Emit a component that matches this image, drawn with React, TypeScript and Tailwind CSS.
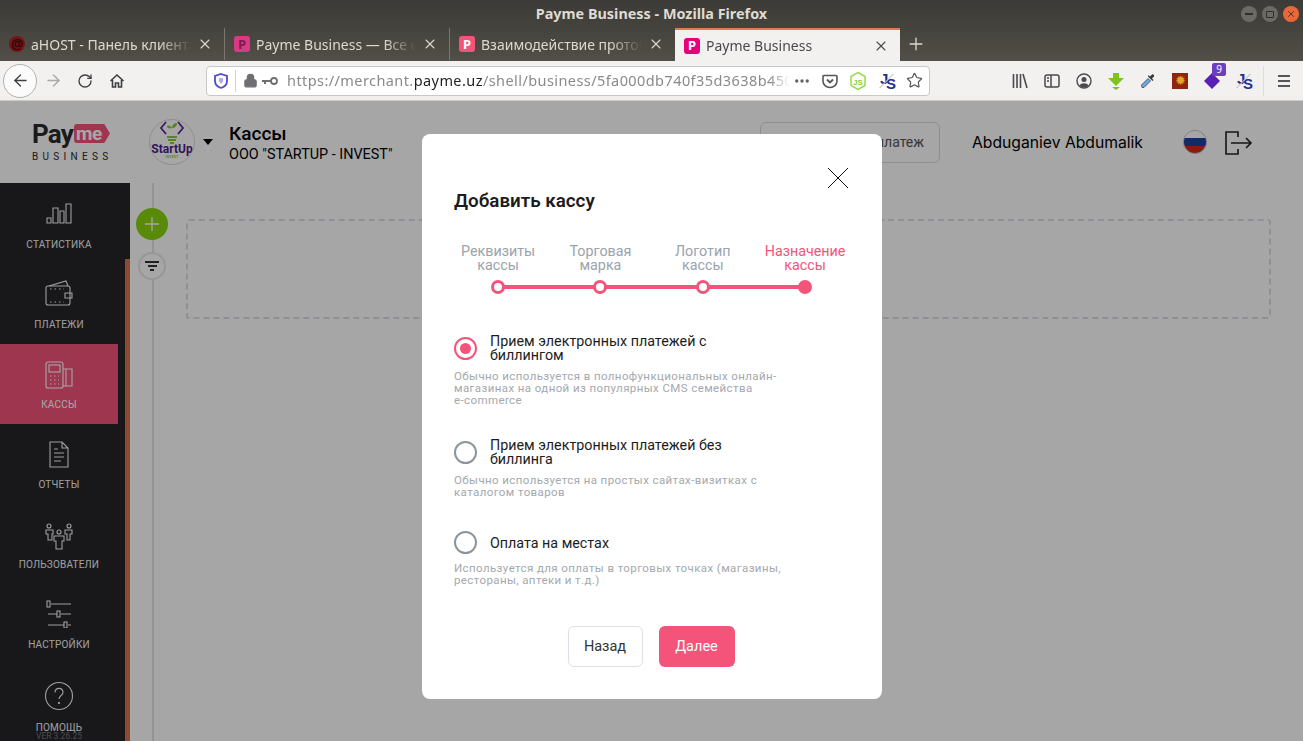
import { ArrowLeft, ArrowRight, RotateCw, Star, Plus, X, Lock, Ellipsis } from "lucide-react";
import { ReactNode } from "react";

const ui = "font-['Noto_Sans','Open_Sans',sans-serif]";
const rubik = "font-['Roboto','Liberation_Sans',sans-serif]";

function Favicon({ color, children }: { color: string; children: ReactNode }) {
  return (
    <span
      className={`flex h-[16px] w-[16px] shrink-0 items-center justify-center rounded-[3px] text-[13px] font-bold leading-none ${color}`}
    >
      {children}
    </span>
  );
}

function Tab({
  title,
  icon,
  active,
  last,
}: {
  title: string;
  icon: ReactNode;
  active?: boolean;
  last?: boolean;
}) {
  return (
    <div
      className={
        active
          ? "flex h-[33px] w-[225px] items-center gap-[6px] border-t-2 border-[#e8784d] bg-[#f2f1ef] pl-[9px] pr-[11px] text-[#4a4a4f]"
          : `flex h-[32px] w-[225px] items-center gap-[6px] pl-[9px] pr-[11px] text-[#dcd9d2] ${last ? "" : "border-r border-[#7a776f]"}`
      }
    >
      {icon}
      <span className="min-w-0 flex-1 overflow-hidden whitespace-nowrap text-[14px] [mask-image:linear-gradient(to_right,black_80%,transparent)]">
        {title}
      </span>
      <X size={16} strokeWidth={1.6} className="shrink-0" />
    </div>
  );
}

function TitleBar() {
  return (
    <div className="relative flex h-[28px] items-center justify-center bg-gradient-to-b from-[#3c3b37] to-[#45433d]">
      <span className="text-[14.4px] font-bold text-[#dfdbd2]">Payme Business - Mozilla Firefox</span>
      <div className="absolute right-[4px] top-[6px] flex gap-[5px]">
        <span className="flex h-[16px] w-[16px] items-center justify-center rounded-full bg-[#6b6a65] text-[#2f2e2b]">
          <span className="h-[1.5px] w-[8px] bg-[#2f2e2b]" />
        </span>
        <span className="flex h-[16px] w-[16px] items-center justify-center rounded-full bg-[#6b6a65]">
          <span className="h-[7px] w-[8px] rounded-[1px] border border-[#2f2e2b]" />
        </span>
        <span className="flex h-[16px] w-[16px] items-center justify-center rounded-full bg-[#e9683a] text-[#3a2a20]">
          <X size={10} strokeWidth={2} />
        </span>
      </div>
    </div>
  );
}

function TabStrip() {
  return (
    <div className="flex h-[33px] items-start bg-gradient-to-b from-[#45433d] to-[#524f48]">
      <Tab title="aHOST - Панель клиента" icon={<span className="flex h-[16px] w-[16px] shrink-0 items-center justify-center rounded-full bg-[#7a1414] text-[14px] font-bold leading-none text-[#2a0a0a]">@</span>} />
      <Tab title="Payme Business — Все функции" icon={<Favicon color="bg-[#d93a86] text-[#7d1d4c]">P</Favicon>} />
      <Tab title="Взаимодействие протокола" icon={<Favicon color="bg-[#f4547a] text-white">P</Favicon>} last />
      <Tab title="Payme Business" icon={<Favicon color="bg-[#e6007e] text-white">P</Favicon>} active />
      <Plus size={20} strokeWidth={1.6} className="ml-[6px] mt-[6px] text-[#dcd9d2]" />
    </div>
  );
}

function ToolIcon({ children }: { children: ReactNode }) {
  return <span className="flex w-[32px] items-center justify-center text-[#4a4a4f]">{children}</span>;
}

function JsIcon() {
  return (
    <span className="relative flex h-[20px] w-[20px] shrink-0 font-['Liberation_Sans',sans-serif] text-[15px] font-bold leading-none text-[#25308f]">
      <span className="absolute left-[3px] top-0">J</span>
      <span className="absolute left-[9px] top-[5px]">S</span>
      <span className="absolute left-[9px] top-0 h-[20px] w-px rotate-45 bg-[#c4c4c4]" />
    </span>
  );
}

function NavBar() {
  return (
    <div className="flex h-[40px] items-center border-b border-[#cfcdca] bg-[#f2f1ef] pl-[3px] text-[#3f3f43]">
      <span className="flex h-[34px] w-[34px] items-center justify-center rounded-full border border-[#b1b1b1] bg-[#fbfbfb]">
        <ArrowLeft size={19} strokeWidth={1.7} />
      </span>
      <ArrowRight size={19} strokeWidth={1.7} className="ml-[7px] text-[#a9a9a9]" />
      <RotateCw size={16} strokeWidth={2} className="ml-[14px]" />
      <svg width="16" height="16" viewBox="0 0 16 16" className="ml-[16px]">
        <path d="M1.500 8 8 2l6.500 6M3.500 7v7h3v-4h3v4h3V7" fill="none" stroke="currentColor" strokeWidth="1.600" />
      </svg>
      <div className="ml-[81px] flex h-[30px] w-[724px] items-center rounded-[4px] border border-[#c8c8c8] bg-white pl-[7px]">
        <svg width="14" height="16" viewBox="0 0 14 16" className="shrink-0">
          <path d="M7 1 13 3v5c0 3.500-3 6-6 7-3-1-6-3.500-6-7V3z" fill="none" stroke="#4b4bd6" strokeWidth="1.800" />
          <path d="M5 5h4v3.500L7 11 5 8.500z" fill="#4b4bd6" opacity="0.45" />
        </svg>
        <span className="ml-[7px] h-[22px] w-px shrink-0 bg-[#d4d4d4]" />
        <Lock size={15} fill="#6f6f73" strokeWidth={2} className="ml-[7px] shrink-0 text-[#6f6f73]" />
        <svg width="18" height="12" viewBox="0 0 18 12" className="ml-[3px] shrink-0">
          <circle cx="13" cy="6" r="3" fill="none" stroke="#6f6f73" strokeWidth="1.800" />
          <path d="M1 5h9v2H5v2H3V7H1z" fill="#6f6f73" />
        </svg>
        <span className="ml-[8px] w-[503px] shrink-0 overflow-hidden whitespace-nowrap text-[14.5px] tracking-[0.42px] text-[#8a8a8e] [mask-image:linear-gradient(to_right,black_96%,transparent)]">
          https://merchant.<span className="text-[#1f1f22]">payme.uz</span>/shell/business/5fa000db740f35d3638b450b
        </span>
        <Ellipsis size={18} strokeWidth={2.4} className="ml-[3px] shrink-0 text-[#5f5f63]" />
        <svg width="16" height="16" viewBox="0 0 16 16" className="ml-[11px] shrink-0">
          <path d="M2 2.500h12a1 1 0 0 1 1 1V8a7 6.500 0 0 1-14 0V3.500a1 1 0 0 1 1-1z" fill="none" stroke="#55555a" strokeWidth="1.600" />
          <path d="m5 6.500 3 3 3-3" fill="none" stroke="#55555a" strokeWidth="1.800" />
        </svg>
        <svg width="18" height="20" viewBox="0 0 18 20" className="ml-[11px] shrink-0">
          <path d="M9 1.500 16 5.500v9l-7 4-7-4v-9z" fill="none" stroke="#9bd84f" strokeWidth="1.500" />
          <text x="9" y="13.500" textAnchor="middle" fontSize="8" fontWeight="700" fill="#8ccc3f" fontFamily="Liberation Sans">JS</text>
        </svg>
        <span className="ml-[10px]">
          <JsIcon />
        </span>
        <Star size={17} strokeWidth={1.7} className="ml-[9px] shrink-0 text-[#55555a]" />
      </div>
      <div className="ml-[74px] flex items-center">
        <ToolIcon>
          <svg width="16" height="16" viewBox="0 0 16 16" stroke="currentColor" strokeWidth="1.600" fill="none">
            <path d="M1.500 1v14M5 1v14M8.500 1v14M11 1l4 14" />
          </svg>
        </ToolIcon>
        <ToolIcon>
          <svg width="16" height="16" viewBox="0 0 16 16" stroke="currentColor" strokeWidth="1.500" fill="none">
            <rect x="1" y="2" width="14" height="12" rx="2" />
            <path d="M7 2v12M3 5h2M3 8h2" />
          </svg>
        </ToolIcon>
        <ToolIcon>
          <svg width="16" height="16" viewBox="0 0 16 16" fill="none">
            <circle cx="8" cy="8" r="7" stroke="currentColor" strokeWidth="1.400" />
            <circle cx="8" cy="6.500" r="2.500" fill="currentColor" />
            <path d="M3.500 12.500C5 9.500 11 9.500 12.500 12.500a6 6 0 0 1-9 0z" fill="currentColor" />
          </svg>
        </ToolIcon>
        <ToolIcon>
          <svg width="18" height="18" viewBox="0 0 18 18">
            <path d="M6 1h6v5h5l-8 8-8-8h5z" fill="#7fc31c" />
            <path d="M5 15h8l-4 3z" fill="#7fc31c" />
          </svg>
        </ToolIcon>
        <ToolIcon>
          <svg width="16" height="16" viewBox="0 0 16 16">
            <path d="M2 14.500 1.500 12 8 5.500 10.500 8 4 14.500z" fill="#6ea6e6" stroke="#444" strokeWidth="0.800" />
            <path d="m8 3.500 4.500 4.500 1-1-1.500-1.500 2-2a1.500 1.500 0 0 0-2-2l-2 2L8.500 2z" fill="#3a3a3a" />
          </svg>
        </ToolIcon>
        <ToolIcon>
          <span className="flex h-[16px] w-[16px] items-center justify-center bg-[#8f2410] text-[13px] leading-none text-[#e5a429]">✹</span>
        </ToolIcon>
        <span className="relative flex w-[32px] items-center justify-center">
          <svg width="18" height="18" viewBox="0 0 18 18">
            <path d="M9 1 17 9l-8 8-8-8z" fill="#5a1fb3" />
          </svg>
          <span className="absolute left-[16px] top-[-9px] flex h-[13px] w-[14px] items-center justify-center rounded-[2px] bg-[#6d3ec4] text-[10px] leading-none text-white">9</span>
        </span>
        <span className="flex w-[32px] items-center justify-center">
          <JsIcon />
        </span>
        <span className="ml-[3px] h-[30px] w-px bg-[#dcdcdc]" />
        <span className="ml-[14px] flex w-[12px] flex-col gap-[3px]">
          <span className="h-[2px] bg-[#55555a]" />
          <span className="h-[2px] bg-[#55555a]" />
          <span className="h-[2px] bg-[#55555a]" />
        </span>
      </div>
    </div>
  );
}

function Logo() {
  return (
    <div className="flex w-[78px] flex-col">
      <div className="flex items-center">
        <span className={`${rubik} text-[26px] font-bold leading-[24px] tracking-[-0.8px] text-[#2a2a2a]`}>Pay</span>
        <span className="ml-[1px] flex h-[19px] w-[36px] items-center rounded-l-[3px] bg-[#f4547a] pl-[2px] text-[19px] font-bold leading-none tracking-[-0.5px] text-white [clip-path:polygon(0_0,84%_0,100%_50%,84%_100%,0_100%)]">
          me
        </span>
      </div>
      <span className="mt-[5px] whitespace-nowrap text-[10px] leading-[12px] tracking-[4.3px] text-[#2a2a2a]">BUSINESS</span>
    </div>
  );
}

function CompanyLogo() {
  return (
    <div className="relative flex h-[46px] w-[46px] flex-col items-center overflow-hidden rounded-full border border-[#d9d9e2] bg-white">
      <svg width="30" height="26" viewBox="0 0 30 26" className="mt-[-1px] shrink-0">
        <path d="m9 3-5 6 5 6M21 3l5 6-5 6" fill="none" stroke="#5b2a9d" strokeWidth="1.800" />
        <path d="M15 16V9c0-3 2-5 5-5 0 3-2 5-5 5-1-2-3-3-5-2 0 2 2 3 5 2" fill="#8cc63f" />
        <path d="M10 18h10M11 21h8M13 24h4" stroke="#8cc63f" strokeWidth="1.800" />
      </svg>
      <span className="mt-[-1px] whitespace-nowrap text-[12px] font-bold leading-[11px] text-[#4b1f8c]">StartUp</span>
      <span className="text-[3px] font-bold leading-[5px] tracking-[0.5px] text-[#8cc63f]">INVEST</span>
    </div>
  );
}

function PageHeader() {
  return (
    <div className="flex h-[82px] items-center bg-white pl-[32px] shadow-[0_4px_12px_rgba(0,0,0,0.06)]">
      <Logo />
      <div className="ml-[39px]">
        <CompanyLogo />
      </div>
      <span className="ml-[8px] h-0 w-0 border-x-[5px] border-t-[6px] border-x-transparent border-t-black" />
      <div className="ml-[16px] w-[531px] pt-[3px]">
        <div className="text-[19px] font-medium leading-[22px] text-black">Кассы</div>
        <div className="text-[14.4px] leading-[19px] text-black">ООО "STARTUP - INVEST"</div>
      </div>
      <div className="flex h-[41px] w-[180px] items-center justify-end rounded-[6px] border border-[#d9d9e2] pr-[15px] text-[14px] text-[#55555a]">
        Новый платеж
      </div>
      <span className="ml-[32px] mt-[1px] w-[171px] whitespace-nowrap font-['Inter',sans-serif] text-[15.7px] text-black">Abduganiev Abdumalik</span>
      <span className="ml-[40px] flex h-[24px] w-[24px] flex-col overflow-hidden rounded-full border border-[#bbb]">
        <span className="h-[7px] bg-white" />
        <span className="h-[8px] bg-[#1b3fa8]" />
        <span className="flex-1 bg-[#d6291f]" />
      </span>
      <svg width="28" height="24" viewBox="0 0 28 24" className="ml-[18px] mt-[1px]" fill="none" stroke="#222" strokeWidth="1.600">
        <path d="M13 6V1H1v22h12v-5M6 12h20M21 7l5 5-5 5" />
      </svg>
    </div>
  );
}

const stroke = { fill: "none", stroke: "currentColor", strokeWidth: 1.1 };

const navItems: { label: string; active?: boolean; offset: string; icon: ReactNode }[] = [
  {
    label: "СТАТИСТИКА",
    offset: "pb-[10px]",
    icon: (
      <svg width="26" height="21" viewBox="0 0 26 21" {...stroke}>
        <path d="M1 20v-5h4v5zM7 20V5h5v15zM14 20V8h4v12zM20 20V1h5v19z" />
      </svg>
    ),
  },
  {
    label: "ПЛАТЕЖИ",
    offset: "pb-[8px]",
    icon: (
      <svg width="28" height="26" viewBox="0 0 28 26" {...stroke}>
        <rect x="1" y="6" width="24" height="19" rx="2" />
        <path d="m4 6 17-5 2 5M20 13h7v5h-7z" />
        <path d="M5 9h14M5 22h14" strokeDasharray="1.500 3" />
      </svg>
    ),
  },
  {
    label: "КАССЫ",
    active: true,
    offset: "pb-[5px]",
    icon: (
      <svg width="28" height="28" viewBox="0 0 28 28" {...stroke}>
        <rect x="1" y="1" width="17" height="26" rx="2" />
        <rect x="4" y="4" width="11" height="7" />
        <path d="M5 15h9M5 19h9M5 23h9" strokeDasharray="1.500 2.500" />
        <path d="M18 8h9v17h-9M21 8v17" />
      </svg>
    ),
  },
  {
    label: "ОТЧЕТЫ",
    offset: "pb-[6px]",
    icon: (
      <svg width="20" height="27" viewBox="0 0 20 27" {...stroke}>
        <path d="M1 1h12l6 6v19H1zM13 1v6h6M5 8h4M5 12h10M5 16h10M5 20h7" />
      </svg>
    ),
  },
  {
    label: "ПОЛЬЗОВАТЕЛИ",
    offset: "pb-[4px]",
    icon: (
      <svg width="28" height="27" viewBox="0 0 28 27" {...stroke}>
        <circle cx="4" cy="3" r="2" />
        <circle cx="24" cy="3" r="2" />
        <circle cx="14" cy="9" r="2" />
        <path d="M1 7h7v4H7v6H3v-6H1zM20 7h7v4h-2v6h-3v-6h-2zM9 13h10v5h-2v8h-6v-8H9z" />
      </svg>
    ),
  },
  {
    label: "НАСТРОЙКИ",
    offset: "pb-[6px]",
    icon: (
      <svg width="26" height="28" viewBox="0 0 26 28" {...stroke}>
        <path d="M5 4h20M2 14h9M15 14h10M2 25h16M22 25h3" />
        <rect x="1" y="1" width="3" height="6" />
        <rect x="11" y="11" width="3" height="6" />
        <rect x="18" y="22" width="3" height="6" />
      </svg>
    ),
  },
  {
    label: "ПОМОЩЬ",
    offset: "pb-[3px]",
    icon: (
      <svg width="30" height="30" viewBox="0 0 30 30" {...stroke}>
        <circle cx="15" cy="15" r="13.500" />
        <path d="M11 11.500c0-5.500 8-5.500 8 0 0 3-4 3-4 6.500" />
        <path d="M15 21v2" strokeWidth="1.800" />
      </svg>
    ),
  },
];

function Sidebar() {
  return (
    <div className="relative flex w-[130px] shrink-0 flex-col overflow-hidden bg-[#25252a] pt-[1px]">
      {/* scrollbar strip along the right edge */}
      <span className="absolute bottom-0 right-0 top-[76px] w-[5px] bg-[#d9724a]" />
      {navItems.map((item) => (
        <div
          key={item.label}
          className={`relative flex h-[80px] w-[118px] shrink-0 flex-col items-center ${item.active ? "bg-[#f4547a] text-white" : "text-[#f5f5f5]"}`}
        >
          <div className={`flex h-[50px] items-end justify-center ${item.offset}`}>{item.icon}</div>
          <span className={`whitespace-nowrap text-[10px] leading-[12px] tracking-[0.2px] ${item.label === "ПОМОЩЬ" ? "mt-[8px]" : "mt-[5px]"}`}>
            {item.label}
          </span>
          {item.label === "ПОМОЩЬ" && (
            <span className="absolute top-[68px] text-[8.5px] leading-[8px] text-[#777]">VER 3.26.25</span>
          )}
        </div>
      ))}
    </div>
  );
}

function MainArea() {
  return (
    <div className="relative flex flex-1 gap-[18px] bg-white pl-[6px]">
      {/* vertical timeline behind the action buttons */}
      <span className="absolute bottom-0 left-[22px] top-0 w-[2px] bg-[#e4e4e4]" />
      <div className="relative flex w-[32px] flex-col items-center gap-[12px] pt-[25px]">
        <span className="flex h-[32px] w-[32px] items-center justify-center rounded-full bg-[#8bd40f] text-white">
          <Plus size={22} strokeWidth={1.5} />
        </span>
        <span className="flex h-[28px] w-[28px] flex-col items-center justify-center gap-[2px] rounded-full border-2 border-[#e8e8e8] bg-white">
          <span className="h-[2px] w-[14px] bg-[#333]" />
          <span className="h-[2px] w-[9px] bg-[#333]" />
          <span className="h-[2px] w-[4px] bg-[#333]" />
        </span>
      </div>
      <div className="mt-[36px] h-[100px] w-[1085px] rounded-[3px] border-2 border-dashed border-[#dcdce6]" />
    </div>
  );
}

function Step({ label, done, current }: { label: string; done?: boolean; current?: boolean }) {
  return (
    <div className="relative z-10 flex w-[102.300px] shrink-0 flex-col items-center">
      <div className={`h-[28px] whitespace-pre-line text-center text-[14.3px] leading-[14px] ${current ? "text-[#f4547a]" : "text-[#9aa3ad]"}`}>
        {label}
      </div>
      <span
        className={`mt-[8px] h-[14px] w-[14px] rounded-full ${done ? "border-[3px] border-[#f4547a] bg-white" : "bg-[#f4547a]"}`}
      />
    </div>
  );
}

function Option({
  title,
  description,
  checked,
  className,
}: {
  title: string;
  description: string;
  checked?: boolean;
  className: string;
}) {
  return (
    <div className={className}>
      <div className="flex items-center">
        <span className={`flex h-[23px] w-[23px] shrink-0 items-center justify-center rounded-full border-2 ${checked ? "border-[#f4547a]" : "border-[#8d959c]"}`}>
          {checked && <span className="h-[11px] w-[11px] rounded-full bg-[#f4547a]" />}
        </span>
        <span className="ml-[13px] w-[260px] whitespace-pre-line text-[14.3px] leading-[14px] text-[#1c1c1c]">{title}</span>
      </div>
      <p className="mt-[8px] w-[340px] whitespace-pre-line text-[11.5px] leading-[12px] tracking-[0.4px] text-[#a4a8ad]">
        {description}
      </p>
    </div>
  );
}

function Modal() {
  return (
    <div className={`${rubik} absolute left-[422px] top-[33px] h-[565px] w-[460px] rounded-[8px] bg-white px-[32px]`}>
      <svg width="22" height="22" viewBox="0 0 22 22" className="absolute left-[405px] top-[33px]">
        <path d="m1 1 20 20M21 1 1 21" stroke="#111" strokeWidth="1" />
      </svg>
      <h2 className="pt-[56px] text-[18.8px] font-semibold leading-[22px] text-[#1c1c1c]">Добавить кассу</h2>
      <div className="relative ml-[-7px] mt-[32px] flex">
        <span className="absolute left-[51px] top-[41px] h-[4px] w-[307px] bg-[#f4547a]" />
        <Step label={"Реквизиты\nкассы"} done />
        <Step label={"Торговая\nмарка"} done />
        <Step label={"Логотип\nкассы"} done />
        <Step label={"Назначение\nкассы"} current />
      </div>
      <Option
        className="mt-[40px]"
        checked
        title={"Прием электронных платежей с\nбиллингом"}
        description={"Обычно используется в полнофункциональных онлайн-\nмагазинах на одной из популярных CMS семейства\ne-commerce"}
      />
      <Option
        className="mt-[32px]"
        title={"Прием электронных платежей без\nбиллинга"}
        description={"Обычно используется на простых сайтах-визитках с\nкаталогом товаров"}
      />
      <Option
        className="mt-[33px]"
        title="Оплата на местах"
        description={"Используется для оплаты в торговых точках (магазины,\nрестораны, аптеки и т.д.)"}
      />
      <div className="mt-[40px] flex justify-center gap-[16px] pr-[2px]">
        <button className="h-[41px] w-[75px] rounded-[6px] border border-[#dcdfe8] bg-white text-[14.5px] text-[#333]">Назад</button>
        <button className="h-[41px] w-[76px] rounded-[6px] bg-[#f4547a] text-[14.5px] text-white">Далее</button>
      </div>
    </div>
  );
}

export default function App() {
  return (
    <div className={`${ui} flex h-[741px] w-[1303px] flex-col overflow-hidden`}>
      <TitleBar />
      <TabStrip />
      <NavBar />
      <div className={`${rubik} relative flex min-h-0 flex-1 flex-col`}>
        <PageHeader />
        <div className="flex min-h-0 flex-1">
          <Sidebar />
          <MainArea />
        </div>
        <div className="absolute inset-0 bg-black/35" />
        <Modal />
      </div>
    </div>
  );
}
